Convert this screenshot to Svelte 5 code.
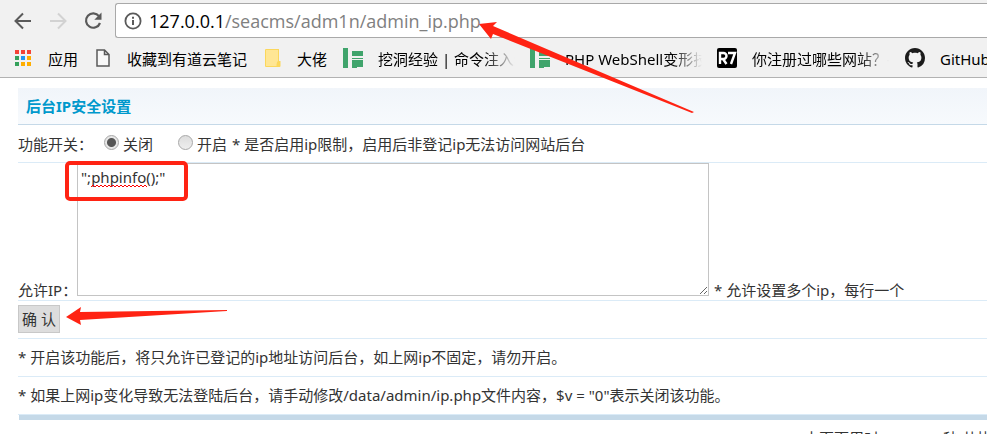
<script>
  let mode = $state('off');
  let ips = $state('";phpinfo();"');
  let address = '127.0.0.1/seacms/adm1n/admin_ip.php';
</script>

<div class="window">
  <header>
    <nav class="toolbar" aria-label="导航">
      <button class="tool" aria-label="后退">
        <svg width="18" height="18" viewBox="0 0 18 18"><path d="M17 9H2M9 1.5 1.5 9 9 16.5" fill="none" stroke="#5a5a5a" stroke-width="2" /></svg>
      </button>
      <button class="tool" aria-label="前进" disabled>
        <svg width="18" height="18" viewBox="0 0 18 18"><path d="M1 9h15M9 1.5 16.5 9 9 16.5" fill="none" stroke="#d2d2d2" stroke-width="2" /></svg>
      </button>
      <button class="tool" aria-label="重新加载">
        <svg width="18" height="18" viewBox="0 0 18 18"><path d="M15 4.2A7.2 7.2 0 1 0 16 11" fill="none" stroke="#5a5a5a" stroke-width="2.2" /><path d="M17.5 .5v7.2h-7.2z" fill="#5a5a5a" /></svg>
      </button>
      <div class="omnibox">
        <svg width="18" height="18" viewBox="0 0 18 18"><circle cx="9" cy="9" r="7.6" fill="none" stroke="#5a5a5a" stroke-width="1.8" /><path d="M9 8v5M9 4.8v2" stroke="#5a5a5a" stroke-width="2" /></svg>
        <a class="url" href="#top"><span>{address.slice(0, 9)}</span>{address.slice(9)}</a>
      </div>
    </nav>
    <nav class="bookmarks" aria-label="书签">
      <a href="#apps" class="b1">
        <svg width="18" height="18" viewBox="0 0 18 18">
          <path d="M1 1h4v4H1zM7 1h4v4H7zM13 1h4v4h-4z" fill="#f44336" />
          <path d="M1 7h4v4H1zM1 13h4v4H1z" fill="#34a15b" /><path d="M7 7h4v4H7z" fill="#2196f3" />
          <path d="M13 7h4v4h-4zM7 13h4v4H7zM13 13h4v4h-4z" fill="#ffae00" />
        </svg>
        <span>应用</span>
      </a>
      <a href="#youdao" class="b2">
        <svg width="14" height="18" viewBox="0 0 14 18"><path d="M1 1h7.5L13 5.5V17H1zM8.5 1v4.5H13" fill="#f8f8f8" stroke="#5a5a5a" stroke-width="1.5" /></svg>
        <span>收藏到有道云笔记</span>
      </a>
      <a href="#dalao" class="b3">
        <svg width="16" height="18" viewBox="0 0 16 18"><path d="M1 0h13v12h1.5v5q0 1-1 1H1q-1 0-1-1V1q0-1 1-1z" fill="#fbd75c" /><path d="M1 1h12v11q-1.5 1-1.5 5H1z" fill="#ffe694" /></svg>
        <span>大佬</span>
      </a>
      <a href="#freebuf" class="b4">
        <svg width="20" height="20" viewBox="0 0 20 20"><path d="M0 0h5v20H0zM9 3h11v5H9zM5 10h15v1H9v-1zM9 12h5v8H9zM9 12h11v7H9z" fill="#40a46c" /></svg>
        <span class="fade">挖洞经验 | 命令注入绕</span>
      </a>
      <a href="#webshell" class="b5">
        <svg width="20" height="20" viewBox="0 0 20 20"><path d="M0 0h5v20H0zM9 3h11v5H9zM5 10h15v1H9v-1zM9 12h5v8H9zM9 12h11v7H9z" fill="#40a46c" /></svg>
        <span class="fade">PHP WebShell变形技</span>
      </a>
      <a href="#reg007" class="b6">
        <svg width="20" height="20" viewBox="0 0 20 20"><rect width="20" height="20" rx="2" fill="#000" /><path d="M3 16V5h3.5a2.5 2.5 0 0 1 0 6H3M6 11l3.5 5M11 5h7l-4 11" fill="none" stroke="#fff" stroke-width="2.4" /></svg>
        <span class="fade">你注册过哪些网站？-</span>
      </a>
      <a href="#github" class="b7">
        <svg width="20" height="20" viewBox="0 0 16 16"><path fill="#1b1b1b" d="M8 0C3.58 0 0 3.58 0 8c0 3.54 2.29 6.53 5.47 7.59.4.07.55-.17.55-.38 0-.19-.01-.82-.01-1.49-2.01.37-2.53-.49-2.69-.94-.09-.23-.48-.94-.82-1.13-.28-.15-.68-.52-.01-.53.63-.01 1.08.58 1.23.82.72 1.21 1.87.87 2.33.66.07-.52.28-.87.51-1.07-1.78-.2-3.64-.89-3.64-3.95 0-.87.31-1.59.82-2.15-.08-.2-.36-1.02.08-2.12 0 0 .67-.21 2.2.82.64-.18 1.32-.27 2-.27s1.36.09 2 .27c1.53-1.04 2.2-.82 2.2-.82.44 1.1.16 1.92.08 2.12.51.56.82 1.27.82 2.15 0 3.07-1.87 3.75-3.65 3.95.29.25.54.73.54 1.48 0 1.07-.01 1.93-.01 2.2 0 .21.15.46.55.38A8.01 8.01 0 0 0 16 8c0-4.42-3.58-8-8-8z" /></svg>
        <span>GitHub</span>
      </a>
    </nav>
    <svg class="arrow long" width="215" height="94" viewBox="0 0 215 94" aria-hidden="true"><path d="M0 4 18 2 14 6 215 92 213 93 14 14 12 19z" fill="#ff2313" /></svg>
  </header>

  <main>
    <h1>后台IP安全设置</h1>
    <form onsubmit={(e) => e.preventDefault()}>
      <div class="row switch">
        <span>功能开关：</span>
        <label class="off"><input type="radio" name="mode" value="off" bind:group={mode} />关闭</label>
        <label><input type="radio" name="mode" value="on" bind:group={mode} />开启</label>
        <span class="hint">* 是否启用ip限制，启用后非登记ip无法访问网站后台</span>
      </div>
      <div class="row allow">
        <label for="ips">允许IP：</label>
        <div class="field">
          <textarea id="ips" bind:value={ips} spellcheck="false"></textarea>
          <svg class="squiggle" width="56" height="4" viewBox="0 0 56 4" aria-hidden="true"><path d="M0 3l2-2 2 2 2-2 2 2 2-2 2 2 2-2 2 2 2-2 2 2 2-2 2 2 2-2 2 2 2-2 2 2 2-2 2 2 2-2 2 2 2-2 2 2 2-2 2 2 2-2 2 2 2-2 2 2" fill="none" stroke="#f00" /></svg>
          <div class="frame"></div>
        </div>
        <span class="note">* 允许设置多个ip，每行一个</span>
      </div>
      <div class="row submit">
        <button class="ok" type="submit">确 认</button>
        <svg class="arrow short" width="162" height="18" viewBox="0 0 162 18" aria-hidden="true"><path d="M0 10 15 0 14 5 161 3v1L14 13 15 18z" fill="#ff2313" /></svg>
      </div>
    </form>
    <p class="row">* 开启该功能后，将只允许已登记的ip地址访问后台，如上网ip不固定，请勿开启。</p>
    <p class="row">* 如果上网ip变化导致无法登陆后台，请手动修改/data/admin/ip.php文件内容，$v = "0"表示关闭该功能。</p>
    <footer>本页面用时0.020243秒,共执行3次数据查询</footer>
  </main>
</div>

<style>
  :global(body) { margin: 0; background: #fff; }
  .window {
    height: 100vh;
    overflow: hidden;
    color: #333;
    font: 15px/20px "Noto Sans", "Noto Sans CJK SC", sans-serif;
    white-space: nowrap;
  }
  header {
    position: relative;
    background: #f1f1f1;
    border-bottom: 1px solid #b2b2b2;
  }
  .toolbar { display: flex; align-items: center; padding: 3px 0 0 14px; }
  .tool { width: 18px; height: 18px; margin-right: 17px; padding: 0; border: 0; background: none; }
  .tool:nth-child(3) { margin-right: 13px; }
  svg { display: block; flex: none; }
  .omnibox {
    flex: 1;
    display: flex;
    align-items: center;
    gap: 7px;
    height: 33px;
    padding-left: 8px;
    border: 1px solid #a9a9a9;
    border-right: 0;
    border-radius: 3px 0 0 3px;
    background: #fff;
  }
  .url { color: #808080; font-family: "Open Sans", sans-serif; font-size: 18px; text-decoration: none; }
  .url span { color: #000; }
  .bookmarks { display: flex; align-items: center; height: 38px; padding: 1px 0 0 14px; }
  .bookmarks a { display: flex; flex: none; align-items: center; color: #000; text-decoration: none; }
  .bookmarks span { padding-top: 1px; }
  .b1 { gap: 16px; width: 82px; }
  .b2 { gap: 17px; width: 169px; }
  .b3 { gap: 16px; width: 78px; }
  .b4, .b5 { gap: 15px; width: 187px; }
  .b6 { gap: 15px; width: 188px; }
  .b7 { gap: 15px; }
  .bookmarks .fade {
    width: 137px;
    overflow: hidden;
    mask-image: linear-gradient(to right, #000 78%, transparent);
  }
  .arrow { position: absolute; z-index: 2; }
  .long { left: 479px; top: 20px; }
  main { padding: 10px 0 0 18px; }
  h1 {
    margin: 0;
    padding: 8px;
    border-bottom: 1px solid #c5d9e8;
    background: linear-gradient(#f1f5fa, #f7fafd);
    color: #0099cc;
    font-size: 15px;
    line-height: 20px;
  }
  .row { margin: 0; border-bottom: 1px solid #dbebf7; }
  p.row { padding: 8px 0 9px; }
  .switch { display: flex; align-items: center; height: 37px; }
  .switch > span:first-child { width: 86px; }
  .switch label { display: flex; align-items: center; gap: 4px; }
  .off { width: 74px; }
  input {
    appearance: none;
    width: 15px;
    height: 15px;
    margin: 0 0 3px;
    border: 1px solid #a8a8a8;
    border-radius: 50%;
    background: linear-gradient(#ddd, #eee);
  }
  input:checked { background: radial-gradient(circle, #555 0 4px, #e6e6e6 5px); }
  .hint { margin-left: 5px; }
  .allow { display: flex; align-items: flex-end; height: 137px; }
  .allow > label { width: 59px; }
  .field { position: relative; width: 632px; height: 133px; align-self: flex-start; }
  textarea {
    display: block;
    box-sizing: border-box;
    width: 100%;
    height: 100%;
    margin: 0;
    padding: 3px;
    border: 1px solid #c4c4c4;
    background: #fff;
    color: #333;
    font: inherit;
  }
  .squiggle { position: absolute; left: 14px; top: 21px; }
  .frame {
    position: absolute;
    left: -12px;
    top: -2px;
    box-sizing: border-box;
    width: 123px;
    height: 40px;
    border: 4px solid #ff2313;
    border-radius: 5px;
  }
  .note { margin-left: 5px; }
  .submit { position: relative; padding: 4px 0 5px; }
  .ok {
    display: block;
    width: 42px;
    height: 28px;
    padding: 0;
    border: 1px solid #c8c8c8;
    background: #ddd;
    color: #333;
    font: inherit;
  }
  .short { left: 48px; top: 6px; }
  footer {
    margin-left: 1px;
    padding: 8px 0 8px 81%;
    border-top: 5px solid #c5d9e8;
  }
</style>
